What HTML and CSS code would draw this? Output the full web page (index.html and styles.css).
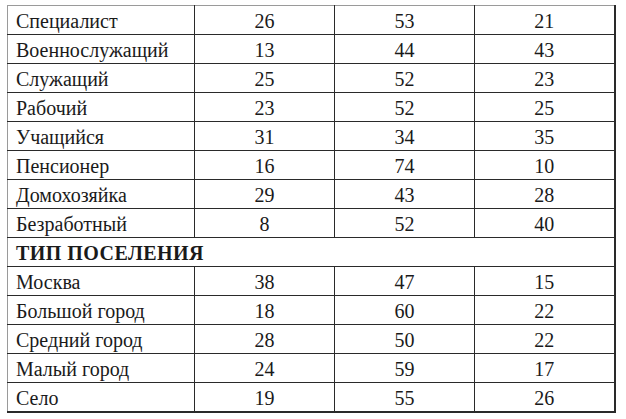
FILE: index.html
```html
<!DOCTYPE html>
<html lang="ru">
<head>
<meta charset="utf-8">
<link rel="stylesheet" href="styles.css">
</head>
<body>
<table class="data">
<colgroup><col class="c-label"><col class="c-num"><col class="c-num"><col class="c-num"></colgroup>
<tbody>
<tr><td class="label">Специалист</td><td>26</td><td>53</td><td>21</td></tr>
<tr><td class="label">Военнослужащий</td><td>13</td><td>44</td><td>43</td></tr>
<tr><td class="label">Служащий</td><td>25</td><td>52</td><td>23</td></tr>
<tr><td class="label">Рабочий</td><td>23</td><td>52</td><td>25</td></tr>
<tr><td class="label">Учащийся</td><td>31</td><td>34</td><td>35</td></tr>
<tr><td class="label">Пенсионер</td><td>16</td><td>74</td><td>10</td></tr>
<tr><td class="label">Домохозяйка</td><td>29</td><td>43</td><td>28</td></tr>
<tr><td class="label">Безработный</td><td>8</td><td>52</td><td>40</td></tr>
<tr><td class="section" colspan="4">ТИП ПОСЕЛЕНИЯ</td></tr>
<tr><td class="label">Москва</td><td>38</td><td>47</td><td>15</td></tr>
<tr><td class="label">Большой город</td><td>18</td><td>60</td><td>22</td></tr>
<tr><td class="label">Средний город</td><td>28</td><td>50</td><td>22</td></tr>
<tr><td class="label">Малый город</td><td>24</td><td>59</td><td>17</td></tr>
<tr><td class="label">Село</td><td>19</td><td>55</td><td>26</td></tr>
</tbody>
</table>
</body>
</html>
```
FILE: styles.css
```css
html, body {
  margin: 0;
  padding: 0;
  background: #fff;
}
body {
  padding: 5px 0 0 7px;
}
.data {
  border-collapse: collapse;
  table-layout: fixed;
  width: 608px;
  font-family: "Liberation Serif", "Times New Roman", serif;
  color: #1a1a1a;
  border-top: 1px solid #9a9a9a;
  border-left: 1px solid #9a9a9a;
  border-right: 2px solid #2a2a2a;
  border-bottom: 2px solid #2a2a2a;
}
.c-label { width: 187px; }
.c-num { width: 140px; }
.data td {
  height: 27px;
  padding: 1px 0 0 0;
  border: 1px solid #2a2a2a;
  text-align: center;
  font-size: 20px;
  vertical-align: middle;
  line-height: 20px;
}
.data td.label {
  text-align: left;
  padding-left: 8px;
  font-size: 20px;
}
.data td.section {
  text-align: left;
  padding-left: 8px;
  font-size: 20px;
  font-weight: bold;
  letter-spacing: 0.45px;
}
.data tr:first-child td { border-top-color: #9a9a9a; }
.data td:first-child { border-left-color: #9a9a9a; }
```
